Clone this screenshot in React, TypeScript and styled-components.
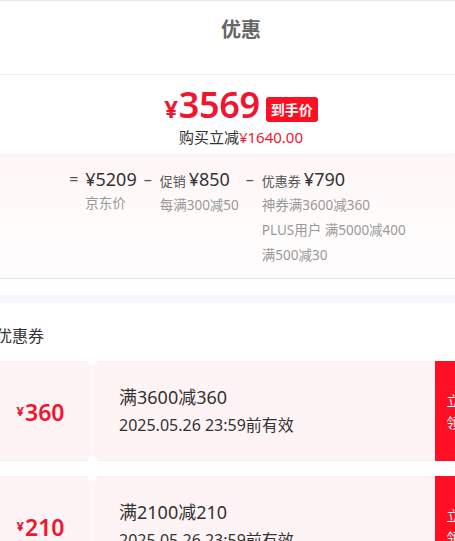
import styled, { createGlobalStyle } from "styled-components";

const GlobalStyle = createGlobalStyle`
  html, body {
    margin: 0;
    padding: 0;
    background: #fff;
    overflow: hidden;
  }
  body {
    font-family: "Noto Sans", "Noto Sans CJK SC", sans-serif;
    color: #333;
  }
`;

const RED = "#f0162f";
const BTN_RED = "#ff0f23";

const Panel = styled.div`
  width: 514px;
  margin-left: -16px;
  border-top: 1px solid #e8e8e8;
`;

const Header = styled.div`
  height: 74px;
  box-sizing: border-box;
  padding-top: 13px;
  text-align: center;
  font-size: 20px;
  font-weight: 700;
  color: #666;
  border-bottom: 1px solid #ececec;
`;

const PriceBlock = styled.div`
  display: flex;
  flex-direction: column;
  align-items: center;
  padding-top: 12px;
  height: 79px;
  box-sizing: border-box;
`;

const PriceLine = styled.div`
  display: flex;
  align-items: center;
  gap: 6px;
  height: 40px;
`;

const BigPrice = styled.span`
  color: ${RED};
  font-size: 36px;
  font-weight: 600;
  line-height: 40px;
  letter-spacing: -0.3px;
`;

const Yen = styled.span<{ $size: number }>`
  font-size: ${(p) => p.$size}px;
  font-weight: 700;
  margin-right: 1px;
`;

const Badge = styled.span`
  background: ${BTN_RED};
  color: #fff;
  font-size: 14px;
  font-weight: 700;
  line-height: 25px;
  padding: 0 5px;
  border-radius: 3px;
  margin-top: 4px;
`;

const Reduce = styled.div`
  font-size: 15px;
  line-height: 22px;
  color: #333;
  margin-top: -1px;
  span {
    color: ${RED};
  }
`;

const Breakdown = styled.div`
  background: linear-gradient(#fff5f6, #fffcfc 60%, #fffdfd);
  border-top: 1px solid #fbeeee;
  border-bottom: 1px solid #f0dcdf;
  height: 125px;
  box-sizing: border-box;
  display: flex;
  justify-content: center;
  padding-top: 12px;
`;

const Item = styled.div`
  display: flex;
  align-items: flex-start;
  margin-right: 7px;
`;

const Op = styled.span`
  width: 16px;
  font-size: 16px;
  line-height: 24px;
  color: #555;
`;

const Col = styled.div`
  display: flex;
  flex-direction: column;
`;

const Top = styled.div`
  display: flex;
  align-items: baseline;
  gap: 3px;
  line-height: 24px;
`;

const Tag = styled.span`
  font-size: 13px;
  color: #555;
`;

const Amount = styled.span`
  font-size: 18px;
  color: #333;
`;

const Label = styled.div`
  font-size: 13.5px;
  color: #999;
  line-height: 25px;
  white-space: nowrap;
  &:first-of-type {
    margin-top: 1px;
  }
`;

const Gap = styled.div`
  height: 16px;
`;

const Band = styled.div`
  height: 8px;
  background: #f6f6fa;
`;

const CouponSection = styled.div`
  padding: 0 12px;
`;

const SectionTitle = styled.div`
  font-size: 16px;
  color: #333;
  line-height: 22px;
  padding: 22px 0 14px;
`;

const CouponList = styled.div`
  display: flex;
  flex-direction: column;
  gap: 15px;
`;

const Card = styled.div`
  display: flex;
  height: 100px;
  background: #fff4f5;
  border: 1px solid #fbecee;
  box-sizing: border-box;
`;

const Left = styled.div`
  position: relative;
  width: 96px;
  box-sizing: border-box;
  padding-right: 8px;
  display: flex;
  align-items: center;
  justify-content: center;
  color: ${RED};
  border-right: 1px solid #fff9fa;
  &::before,
  &::after {
    content: "";
    position: absolute;
    right: -5px;
    width: 9px;
    height: 9px;
    border-radius: 50%;
    background: #fff;
  }
  &::before {
    top: -5px;
  }
  &::after {
    bottom: -5px;
  }
`;

const CouponValue = styled.span`
  font-size: 23px;
  font-weight: 600;
  padding-top: 2px;
`;

const Info = styled.div`
  flex: 1;
  display: flex;
  flex-direction: column;
  justify-content: center;
  padding-left: 26px;
  gap: 4px;
`;

const Cond = styled.div`
  font-size: 18px;
  color: #333;
  line-height: 24px;
`;

const Valid = styled.div`
  font-size: 16px;
  color: #333;
  line-height: 24px;
`;

const Claim = styled.button`
  width: 51px;
  border: none;
  background: ${BTN_RED};
  color: #fff;
  font-family: inherit;
  font-size: 14px;
  line-height: 22px;
  padding: 2px 11px 0;
  margin: -1px -1px -1px 0;
`;

const coupons = [
  { value: "360", cond: "满3600减360", valid: "2025.05.26 23:59前有效" },
  { value: "210", cond: "满2100减210", valid: "2025.05.26 23:59前有效" },
];

export default function App() {
  return (
    <>
      <GlobalStyle />
      <Panel>
        <Header>优惠</Header>
        <PriceBlock>
          <PriceLine>
            <BigPrice>
              <Yen $size={24}>¥</Yen>3569
            </BigPrice>
            <Badge>到手价</Badge>
          </PriceLine>
          <Reduce>
            购买立减<span>¥1640.00</span>
          </Reduce>
        </PriceBlock>
        <Breakdown>
          <Item>
            <Op>=</Op>
            <Col>
              <Top>
                <Amount>¥5209</Amount>
              </Top>
              <Label>京东价</Label>
            </Col>
          </Item>
          <Item>
            <Op>–</Op>
            <Col>
              <Top>
                <Tag>促销</Tag>
                <Amount>¥850</Amount>
              </Top>
              <Label>每满300减50</Label>
            </Col>
          </Item>
          <Item>
            <Op>–</Op>
            <Col>
              <Top>
                <Tag>优惠券</Tag>
                <Amount>¥790</Amount>
              </Top>
              <Label>神券满3600减360</Label>
              <Label>PLUS用户 满5000减400</Label>
              <Label>满500减30</Label>
            </Col>
          </Item>
        </Breakdown>
        <Gap />
        <Band />
        <CouponSection>
          <SectionTitle>优惠券</SectionTitle>
          <CouponList>
            {coupons.map((c) => (
              <Card key={c.value}>
                <Left>
                  <Yen $size={13}>¥</Yen>
                  <CouponValue>{c.value}</CouponValue>
                </Left>
                <Info>
                  <Cond>{c.cond}</Cond>
                  <Valid>{c.valid}</Valid>
                </Info>
                <Claim>
                  立即
                  <br />
                  领取
                </Claim>
              </Card>
            ))}
          </CouponList>
        </CouponSection>
      </Panel>
    </>
  );
}
